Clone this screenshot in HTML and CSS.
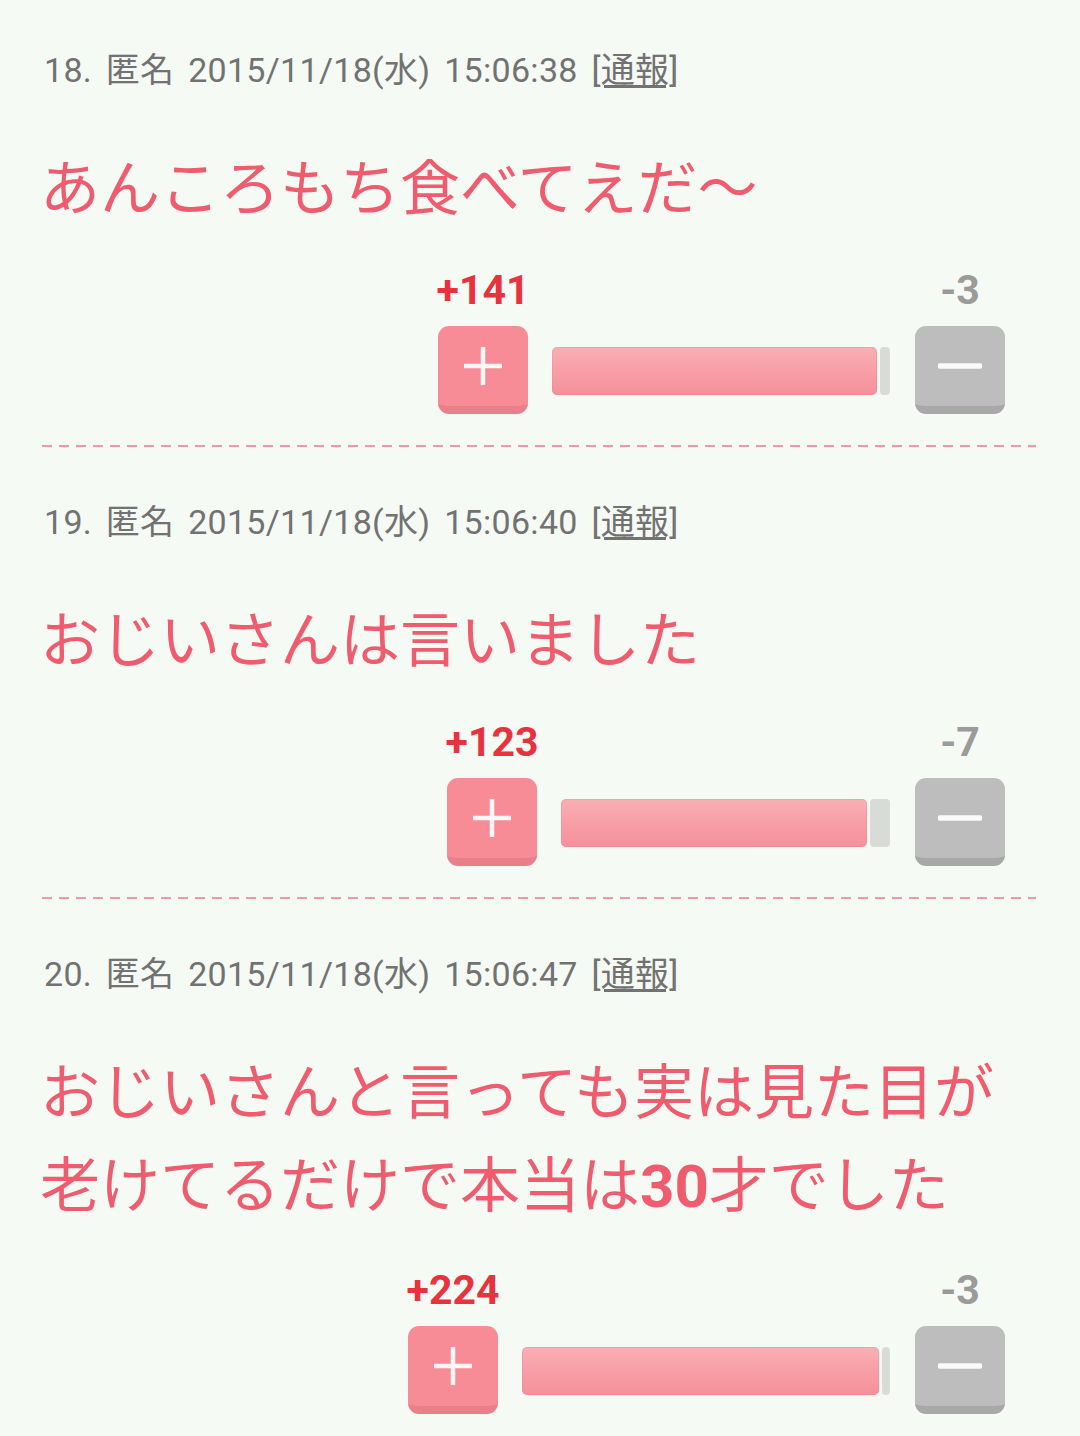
FILE: index.html
```html
<!DOCTYPE html>
<html lang="ja">
<head>
    <meta charset="UTF-8">
    <meta name="viewport" content="width=device-width, initial-scale=1.0">
    <title>コメント</title>
    <link rel="stylesheet" href="styles.css">
</head>
<body>

    <div class="comments">

        <!-- 18 -->
        <div class="post">
            <div class="post-head">18. 匿名 2015/11/18(水) 15:06:38 <a href="#">[通報]</a></div>
            <div class="post-body">あんころもち食べてえだ〜</div>
            <div class="vote">
                <div class="vote-col">
                    <span class="count plus-count">+141</span>
                    <div class="btn btn-plus">
                        <svg width="40" height="40" viewBox="0 0 40 40"><path d="M20 1v38M1 20h38" stroke="#fff" stroke-width="4.5" stroke-opacity="0.92"/></svg>
                    </div>
                </div>
                <div class="bar" style="width: 338px">
                    <div class="bar-fill" style="width: 325px"></div>
                    <div class="bar-rest"></div>
                </div>
                <div class="vote-col minus-col">
                    <span class="count minus-count">-3</span>
                    <div class="btn btn-minus">
                        <svg width="44" height="8" viewBox="0 0 44 8"><path d="M2 4h40" stroke="#fff" stroke-width="5.5" stroke-linecap="round" stroke-opacity="0.92"/></svg>
                    </div>
                </div>
            </div>
        </div>
        <hr class="sep">

        <!-- 19 -->
        <div class="post">
            <div class="post-head">19. 匿名 2015/11/18(水) 15:06:40 <a href="#">[通報]</a></div>
            <div class="post-body">おじいさんは言いました</div>
            <div class="vote">
                <div class="vote-col">
                    <span class="count plus-count">+123</span>
                    <div class="btn btn-plus">
                        <svg width="40" height="40" viewBox="0 0 40 40"><path d="M20 1v38M1 20h38" stroke="#fff" stroke-width="4.5" stroke-opacity="0.92"/></svg>
                    </div>
                </div>
                <div class="bar" style="width: 329px">
                    <div class="bar-fill" style="width: 306px"></div>
                    <div class="bar-rest"></div>
                </div>
                <div class="vote-col minus-col">
                    <span class="count minus-count">-7</span>
                    <div class="btn btn-minus">
                        <svg width="44" height="8" viewBox="0 0 44 8"><path d="M2 4h40" stroke="#fff" stroke-width="5.5" stroke-linecap="round" stroke-opacity="0.92"/></svg>
                    </div>
                </div>
            </div>
        </div>
        <hr class="sep">

        <!-- 20 -->
        <div class="post post-last">
            <div class="post-head">20. 匿名 2015/11/18(水) 15:06:47 <a href="#">[通報]</a></div>
            <div class="post-body">おじいさんと言っても実は見た目が老けてるだけで本当は<b>30</b>才でした</div>
            <div class="vote">
                <div class="vote-col">
                    <span class="count plus-count">+224</span>
                    <div class="btn btn-plus">
                        <svg width="40" height="40" viewBox="0 0 40 40"><path d="M20 1v38M1 20h38" stroke="#fff" stroke-width="4.5" stroke-opacity="0.92"/></svg>
                    </div>
                </div>
                <div class="bar" style="width: 368px">
                    <div class="bar-fill" style="width: 357px"></div>
                    <div class="bar-rest"></div>
                </div>
                <div class="vote-col minus-col">
                    <span class="count minus-count">-3</span>
                    <div class="btn btn-minus">
                        <svg width="44" height="8" viewBox="0 0 44 8"><path d="M2 4h40" stroke="#fff" stroke-width="5.5" stroke-linecap="round" stroke-opacity="0.92"/></svg>
                    </div>
                </div>
            </div>
        </div>

    </div>

</body>
</html>
```

FILE: styles.css
```css
body {
    margin: 0;
    background-color: #f6faf4;
    font-family: Roboto, "Noto Sans CJK JP", sans-serif;
}

.comments {
    padding: 0 44px 0 42px;
}

.post {
    padding: 55px 0 31px 2px;
}

.post:first-child {
    padding-top: 50px;
}

.post-head {
    font-size: 34px;
    line-height: 40px;
    letter-spacing: 0.3px;
    word-spacing: 5px;
    color: #727272;
    white-space: nowrap;
}

.post-head a {
    color: #727272;
    text-decoration: underline;
    text-underline-offset: 3px;
}

.post-body {
    margin: 47px 0 0 -4px;
    font-family: "Noto Sans CJK JP", sans-serif;
    font-size: 60px;
    line-height: 93px;
    color: #ee5c6e;
}

.post-body b {
    font-family: Roboto, sans-serif;
    font-weight: 700;
    line-height: 1;
}

/* vote row */
.vote {
    display: flex;
    justify-content: flex-end;
    align-items: flex-end;
    margin-top: 38px;
    padding-right: 31px;
}

.post-last .vote {
    margin-top: 41px;
}

.vote-col {
    width: 90px;
    display: flex;
    flex-direction: column;
    align-items: center;
}

.minus-col {
    margin-left: 25px;
}

.count {
    font-family: Roboto, sans-serif;
    font-weight: 700;
    font-size: 41px;
    line-height: 44px;
    margin-bottom: 14px;
    white-space: nowrap;
}

.plus-count {
    color: #e8333f;
}

.minus-count {
    color: #9b9b9b;
}

.btn {
    width: 90px;
    height: 80px;
    border-radius: 11px;
    border-bottom: 8px solid;
    display: flex;
    justify-content: center;
    align-items: center;
}

.btn-plus {
    background-color: #f88c96;
    border-color: #e97f89;
}

.btn-minus {
    background-color: #bdbdbd;
    border-color: #a8a8a8;
}

.bar {
    display: flex;
    gap: 3px;
    height: 48px;
    margin-left: 24px;
    margin-bottom: 19px;
}

.bar-fill {
    height: 100%;
    border-radius: 5px;
    background: linear-gradient(#f8b0b5, #f8a0a7 45%, #f6909a);
    box-shadow: inset 0 0 0 1px rgba(230, 120, 130, 0.25);
}

.bar-rest {
    flex: 1;
    height: 100%;
    border-radius: 4px;
    background-color: #d9dbd9;
}

.sep {
    height: 2px;
    margin: 0;
    border: none;
    background: repeating-linear-gradient(90deg, #ef98aa 0 10px, transparent 10px 17px);
}
```
